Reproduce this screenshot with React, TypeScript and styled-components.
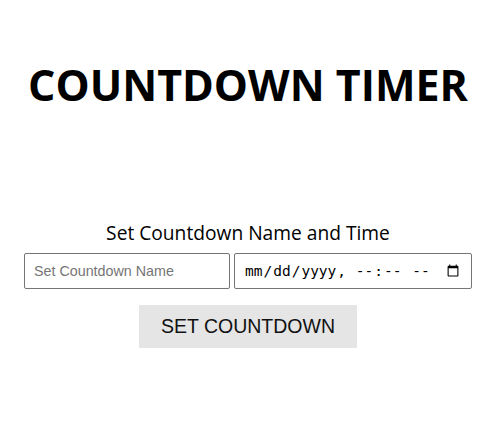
import React from "react";
import styled, { createGlobalStyle } from "styled-components";

const Global = createGlobalStyle`
  html, body { margin: 0; padding: 0; background: #fff; }
  body { font-family: "Open Sans", "Noto Sans", sans-serif; color: #000; }
`;

const Page = styled.main`
  display: flex;
  flex-direction: column;
  align-items: center;
  padding-top: 57px;
`;

const Title = styled.h1`
  margin: 0;
  font-family: "Open Sans", sans-serif;
  font-weight: 700;
  font-size: 43px;
  line-height: 56px;
  letter-spacing: 0;
`;

const Form = styled.form`
  margin-top: 107px;
  display: flex;
  flex-direction: column;
  align-items: center;
`;

const Label = styled.label`
  font-family: "Open Sans", sans-serif;
  font-size: 19.2px;
  line-height: 26px;
`;

const Row = styled.div`
  margin-top: 7px;
  display: flex;
  gap: 4px;
`;

const Field = styled.input<{ $w: number; $mono?: boolean }>`
  box-sizing: border-box;
  width: ${(p) => p.$w}px;
  height: 36px;
  padding: 0 9px;
  border: 1px solid #767676;
  border-radius: 2px;
  font-family: ${(p) =>
    p.$mono ? '"DejaVu Sans Mono", monospace' : '"Liberation Sans", Arial, sans-serif'};
  font-size: ${(p) => (p.$mono ? "14.5px" : "14.3px")};
  color: #000;
  &::placeholder { color: #757575; }
`;

const Button = styled.button`
  margin-top: 16px;
  width: 218px;
  height: 43px;
  border: none;
  background: #e5e5e5;
  font-family: "Liberation Sans", Arial, sans-serif;
  font-size: 19.5px;
  color: #111;
`;

export default function App() {
  return (
    <>
      <Global />
      <Page>
        <Title>COUNTDOWN TIMER</Title>
        <Form onSubmit={(e) => e.preventDefault()}>
          <Label>Set Countdown Name and Time</Label>
          <Row>
            <Field $w={206} type="text" placeholder="Set Countdown Name" />
            <Field $w={238} $mono type="datetime-local" />
          </Row>
          <Button type="submit">SET COUNTDOWN</Button>
        </Form>
      </Page>
    </>
  );
}
